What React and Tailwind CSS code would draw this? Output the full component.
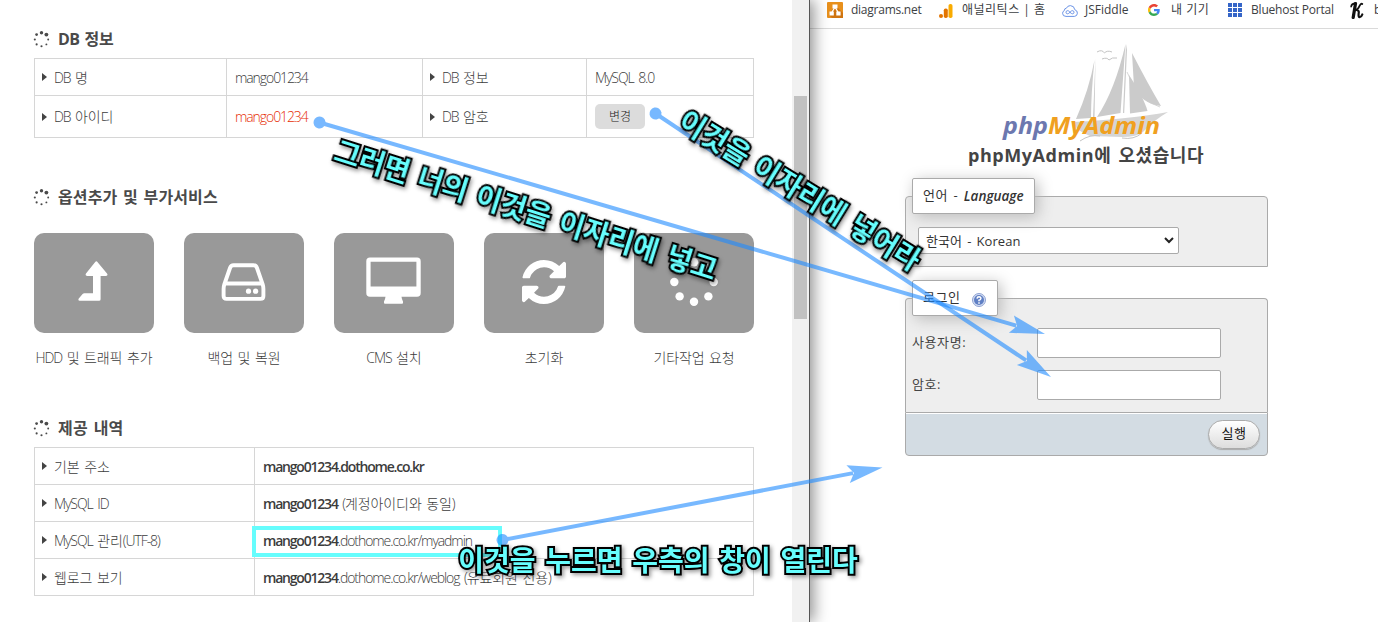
import React from "react";

/* Latin text takes the tight tracking of its parent; Hangul runs get their own. */
function Mix({ t }) {
  return t.split(/([\uac00-\ud7a3]+)/).map((s, i) =>
    i % 2 ? <span key={i} className="tracking-[-0.1px]">{s}</span> : s
  );
}

function Spinner({ size, dots, className }) {
  const pts = [
    [0, -6.3], [4.6, -4.6], [6.3, 0], [4.6, 4.6], [0, 6.3], [-4.6, 4.6], [-6.3, 0], [-4.6, -4.6],
  ];
  return (
    <svg width={size} height={size} viewBox="-8 -8 16 16" className={className} fill="currentColor">
      {pts.map(([x, y], i) => <circle key={i} cx={x} cy={y} r={dots[i]} />)}
    </svg>
  );
}

const smallDots = [1.6, 1.8, 0.9, 0.9, 1, 1, 1, 1.3];
const bigDots = [1.35, 1.35, 1.35, 1.35, 1.35, 1.35, 1.35, 1.35];

function Heading({ children, className }) {
  return (
    <h2 className={`flex h-6 items-center text-[16px] font-bold tracking-[-0.6px] text-[#4a4a4a] [word-spacing:1.5px] ${className}`}>
      <Spinner size={17} dots={smallDots} className="-ml-[1px] mr-[8px]" />
      <span className="whitespace-nowrap">{children}</span>
    </h2>
  );
}

function Label({ children }) {
  return (
    <div className="flex items-center border-r border-b border-[#d6d6d6] pl-[7px]">
      <svg width="5" height="8" viewBox="0 0 5 8" className="mr-[7px] fill-[#444]"><path d="M0 0 5 4 0 8z" /></svg>
      <span className="whitespace-nowrap"><Mix t={children} /></span>
    </div>
  );
}

function Cell({ children, className = "" }) {
  return (
    <div className={`flex items-center border-r border-b border-[#d6d6d6] pl-2 whitespace-pre ${className}`}>
      {children}
    </div>
  );
}

function Host({ children }) {
  return <b className="font-semibold tracking-[-1.2px]">{children}</b>;
}

const services = [
  ["HDD 및 트래픽 추가", (
    <svg width="32" height="42" viewBox="0 0 32 42" className="-mt-[5px] fill-white">
      <path d="M19 1.6 29 13.4Q30.4 15.6 28 16H22.6V39.2Q22.6 40.7 21 40.7H1.6Q-.3 40.2.8 38.6L4.6 34Q5.4 33.3 6.3 33.3H15V16H9.2Q6.8 15.6 8 13.4L17.4 1.8Q18.2.7 19 1.6Z" />
    </svg>
  )],
  ["백업 및 복원", (
    <svg width="45" height="38" viewBox="0 0 45 38" className="-mt-[2px] mr-[2px] fill-none stroke-white">
      <path d="M9 5Q10 2.3 12.5 2.3H32.5Q35 2.3 36 5L41.7 21.5Q42.4 23.5 42.4 26V33Q42.4 35.9 39.5 35.9H5.5Q2.6 35.9 2.6 33V26Q2.6 23.5 3.3 21.5ZM3.5 20.5H41.5" strokeWidth="3.9" />
      <circle cx="27.5" cy="28.2" r="2.6" className="fill-white stroke-none" />
      <circle cx="34.6" cy="28.2" r="2.6" className="fill-white stroke-none" />
    </svg>
  )],
  ["CMS 설치", (
    <svg width="55" height="48" viewBox="0 0 55 48" className="-mt-[5px] mr-[2px] fill-white">
      <path fillRule="evenodd" d="M4 .6H51Q54.7.6 54.7 4.3V36Q54.7 39.8 51 39.8H35.5Q35.7 42 37 44.5V46Q37 46.8 36 46.8H19Q18 46.8 18 46V44.5Q19.3 42 19.5 39.8H4Q.3 39.8.3 36V4.3Q.3.6 4 .6ZM4.6 4.8V29.4H50.4V4.8Z" />
    </svg>
  )],
  ["초기화", (
    <svg width="44" height="44" viewBox="0 0 1536 1536" className="-mt-[2px] mr-[1px] fill-white">
      <path d="M1511 928q0 5-1 7-64 268-268 434.500T764 1536q-146 0-282.500-55T238 1324l-129 129q-19 19-45 19t-45-19-19-45V960q0-26 19-45t45-19h448q26 0 45 19t19 45-19 45l-137 137q71 66 161 102t187 36q134 0 250-65t186-179q11-17 53-117 8-23 30-23h192q13 0 22.500 9.500T1511 928zM1536 128v448q0 26-19 45t-45 19h-448q-26 0-45-19t-19-45 19-45l138-138Q969 256 768 256q-134 0-250 65T332 500q-11 17-53 117-8 23-30 23H50q-13 0-22.500-9.500T18 608v-7q65-268 270-434.500T768 0q146 0 284 55.500T1297 212l130-129q19-19 45-19t45 19 19 45z" />
    </svg>
  )],
  ["기타작업 요청", <Spinner key="s" size={50} dots={bigDots} className="-mt-[3px] mr-[1px] text-white" />],
];

function HostingPanel() {
  return (
    <section className="relative z-10 flex h-[622px] w-[810px] shrink-0 border-r border-[#555] bg-white text-[14px] font-light tracking-[-1.08px] text-[#3c3c3c] shadow-[4px_0_14px_rgba(0,0,0,0.42)] [word-spacing:2px]">
      <div className="w-[792px] pl-[34px]">
        <Heading className="mt-[27px]">DB <span className="tracking-[-0.2px]">정보</span></Heading>
        <div className="mt-[7px] grid w-[720px] grid-cols-[192px_196px_164px_167px] grid-rows-[37px_42px] border-t border-l border-[#d6d6d6]">
          <Label>DB 명</Label>
          <Cell>mango01234</Cell>
          <Label>DB 정보</Label>
          <Cell>MySQL 8.0</Cell>
          <Label>DB 아이디</Label>
          <Cell className="text-[#e62e05]">mango01234</Cell>
          <Label>DB 암호</Label>
          <Cell>
            <button className="h-[25px] w-[50px] rounded-[5px] bg-[#dcdcdc] text-[12px] tracking-[0px] text-[#222]">변경</button>
          </Cell>
        </div>

        <Heading className="mt-[47px]"><span className="tracking-[0.1px]">옵션추가 및 부가서비스</span></Heading>
        <div className="mt-[24px] flex gap-[30px]">
          {services.map(([name, icon]) => (
            <div key={name} className="w-[120px]">
              <div className="flex h-[100px] items-center justify-center rounded-[10px] bg-[#999]">{icon}</div>
              <div className="mt-[15px] text-center text-[14px] leading-5 whitespace-nowrap"><Mix t={name} /></div>
            </div>
          ))}
        </div>

        <Heading className="mt-[48px]"><span className="tracking-[0.2px]">제공 내역</span></Heading>
        <div className="mt-[7px] grid w-[720px] grid-cols-[220px_499px] auto-rows-[37px] border-t border-l border-[#d6d6d6]">
          <Label>기본 주소</Label>
          <Cell><Host>mango01234.dothome.co.kr</Host></Cell>
          <Label>MySQL ID</Label>
          <Cell><span><Host>mango01234</Host> <Mix t="(계정아이디와 동일)" /></span></Cell>
          <Label>MySQL 관리(UTF-8)</Label>
          <Cell className="relative">
            <span><Host>mango01234</Host>.dothome.co.kr/myadmin</span>
            <span className="absolute top-[4px] left-[-3px] h-[31px] w-[250px] border-4 border-[#66fdfd]" />
          </Cell>
          <Label>웹로그 보기</Label>
          <Cell><span><Host>mango01234</Host>.dothome.co.kr/weblog <Mix t="(유료회원 전용)" /></span></Cell>
        </div>
      </div>
      <div className="w-[17px] bg-[#f1f1f1] px-[2px] pt-[96px]">
        <div className="h-[223px] bg-[#c1c1c1]" />
      </div>
    </section>
  );
}

function BookmarkBar() {
  return (
    <nav className="flex h-[29px] items-start overflow-hidden border-b border-[#dadada] text-[12px] leading-[20px] whitespace-nowrap text-[#3c4043]">
      <svg width="16" height="16" viewBox="0 0 16 16" className="mt-[2px] ml-[17px] shrink-0">
        <rect width="16" height="16" rx="1" fill="#e8901c" /><path d="M8 3 16 11V16H5L2 13Z" fill="#cf7410" />
        <path d="M8 5 4.500 11M8 5 11.500 11" stroke="#fff" strokeWidth="1.300" />
        <path d="M5.500 2.500h5v4h-5zM2.500 9.500h4.300v4H2.500zM9.300 9.500h4.300v4H9.300z" fill="#fff" />
      </svg>
      <span className="ml-[8px] w-[88px] shrink-0 tracking-[-0.25px]">diagrams.net</span>
      <svg width="14" height="14" viewBox="0 0 14 14" className="mt-[4px] shrink-0">
        <rect x="9.500" width="4" height="14" rx="1.800" fill="#f9ab00" /><rect x="4.800" y="4.500" width="4" height="9.500" rx="1.800" fill="#e37400" /><circle cx="2" cy="12" r="2" fill="#e37400" />
      </svg>
      <span className="ml-[9px] w-[100px] shrink-0 tracking-[0.5px]">애널리틱스 | 홈</span>
      <svg width="16" height="12" viewBox="0 0 16 12" className="mt-[5px] shrink-0 fill-none stroke-[#6b93e6]">
        <path d="M4 11.400Q.6 11.400.6 8.300.6 6.200 2.400 5.500 2.300 3.300 4.400 3.200 5.500.6 8.400.6 12.300.8 12.800 4.700 15.400 5.500 15.400 8.200 15.200 11.200 12.400 11.400Z" />
        <path d="M8 7.300Q6.500 5.400 5.300 5.700 3.900 6 4 7.300 4.100 8.700 5.400 8.800 6.600 8.800 8 7.300 9.500 5.400 10.700 5.700 12.100 6 12 7.300 11.900 8.700 10.600 8.800 9.400 8.800 8 7.300" />
      </svg>
      <span className="ml-[7px] w-[63px] shrink-0">JSFiddle</span>
      <svg width="12" height="12" viewBox="0 0 48 48" className="mt-[4px] shrink-0">
        <path fill="#EA4335" d="M24 9.500c3.540 0 6.710 1.220 9.210 3.600l6.850-6.850C35.900 2.380 30.470 0 24 0 14.620 0 6.510 5.380 2.560 13.220l7.980 6.190C12.430 13.720 17.740 9.500 24 9.500z" />
        <path fill="#4285F4" d="M46.980 24.550c0-1.570-.15-3.090-.38-4.550H24v9.020h12.940c-.58 2.960-2.260 5.480-4.780 7.180l7.730 6c4.510-4.180 7.090-10.360 7.090-17.650z" />
        <path fill="#FBBC05" d="M10.530 28.590c-.48-1.450-.76-2.990-.76-4.590s.27-3.140.76-4.590l-7.980-6.190C.92 16.460 0 20.120 0 24c0 3.880.92 7.540 2.560 10.780l7.970-6.190z" />
        <path fill="#34A853" d="M24 48c6.480 0 11.930-2.130 15.890-5.810l-7.730-6c-2.150 1.450-4.920 2.300-8.160 2.300-6.260 0-11.570-4.220-13.470-9.910l-7.980 6.190C6.510 42.620 14.620 48 24 48z" />
      </svg>
      <span className="ml-[11px] w-[57px] shrink-0 tracking-[0.5px]">내 기기</span>
      <svg width="14" height="14" viewBox="0 0 14 14" className="mt-[3px] shrink-0 fill-[#3565c8]">
        <path d="M0 0h4v4H0zM5 0h4v4H5zM10 0h4v4h-4zM0 5h4v4H0zM5 5h4v4H5zM10 5h4v4h-4zM0 10h4v4H0zM5 10h4v4H5zM10 10h4v4h-4z" />
      </svg>
      <span className="ml-[9px] w-[99px] shrink-0 tracking-[-0.2px]">Bluehost Portal</span>
      <svg width="14" height="17" viewBox="0 0 14 17" className="mt-[2px] shrink-0 fill-none stroke-[#111]" strokeLinecap="round">
        <path d="M5.500 1.500 3.200 15.500" strokeWidth="3.200" /><path d="M5.500 1.500Q1.500 1.500 1.200 4.500M12.300 2Q11 1 9.500 4 8 7.800 5 8.300" strokeWidth="1.800" /><path d="M6.500 8Q9.500 8 8.600 12 8.300 15.500 10 15 11.500 14.800 12.300 12.500" strokeWidth="2.200" />
      </svg>
      <span className="ml-[10px]">b</span>
    </nav>
  );
}

function Logo() {
  return (
    <svg width="170" height="100" viewBox="1000 42 170 100" className="ml-[190px] block">
      <g fill="#cbcbcb">
        <path d="M1094.500 60Q1091 94 1091 118L1076 119Q1089 90 1094.500 60ZM1095.500 58 1094.500 118H1093Z" />
        <path d="M1125.500 44 1120.500 113 1097 117Q1115 90 1125.500 44ZM1126 44 1123 113H1124.200L1127 50Z" />
        <path d="M1129 75Q1144 98 1147.500 111L1130 113.500Z" />
        <path d="M1132 53Q1148 84 1161 106 1142 104 1134 87Z" />
        <path d="M1127 72Q1138 101 1160 107" fill="none" stroke="#cbcbcb" strokeWidth=".8" />
        <path d="M1073 122Q1130 119 1168 112 1154 120 1143 132 1137 137 1122 137L1090 136Q1075 130 1073 122Z" opacity=".8" />
      </g>
      <path d="M1097 52Q1102 49 1104.500 53 1107 50 1112 52M1102 59Q1107 57 1109 60 1112 57 1117 58M1080 141Q1090 134 1100 136M1122 138Q1134 140 1142 133" fill="none" stroke="#c4c4c4" strokeWidth="1" />
      <g fontFamily="'Noto Sans','Open Sans',sans-serif" fontSize="24" fontWeight="700" fontStyle="italic">
        <text x="1003" y="133.500" fill="#6c78af" textLength="45" lengthAdjust="spacingAndGlyphs">php</text>
        <text x="1048" y="133.500" fill="#f0a020" textLength="112" lengthAdjust="spacingAndGlyphs">MyAdmin</text>
      </g>
    </svg>
  );
}

const legend = "absolute left-[6px] top-[-19px] flex h-[36px] items-center border border-[#aaa] bg-white pl-[10px] rounded-[2px] text-[#333] shadow-[3px_3px_15px_#bbb] whitespace-pre";

function LoginPanel() {
  return (
    <section className="h-[622px] w-[568px] overflow-hidden bg-white text-[13px] text-[#444]">
      <BookmarkBar />
      <div className="pt-[13px]"><Logo /></div>
      <h1 className="ml-[158px] h-[27px] text-[18px] leading-[27px] font-bold tracking-[0.55px] whitespace-nowrap [word-spacing:2px]">phpMyAdmin에 오셨습니다</h1>

      <div className="relative mt-[27px] ml-[95px] h-[71px] w-[363px] rounded-t-[4px] border border-[#aaa] bg-[#eee] pt-[30px] pl-[12px]">
        <div className={`${legend} w-[123px]`}><span className="tracking-[0.6px] [word-spacing:1.5px]">언어 - </span><i className="text-[13.5px] font-semibold">Language</i></div>
        <div className="flex h-[27px] w-[261px] items-center justify-between rounded-[2px] border border-[#aaa] bg-white pr-[4px] pl-[7px] text-[13px] text-[#333]">
          <span className="mt-[2px] tracking-[0.1px] [word-spacing:1.5px]">한국어 - Korean</span>
          <svg width="10" height="7" viewBox="0 0 10 7" className="fill-none stroke-[#222]"><path d="M1 1 5 5 9 1" strokeWidth="2" /></svg>
        </div>
      </div>

      <div className="relative mt-[31px] ml-[95px] flex h-[114px] w-[363px] flex-col gap-[12px] rounded-t-[4px] border border-b-0 border-[#aaa] bg-[#eee] pt-[29px] pl-[6px]">
        <div className={`${legend} w-[86px]`}>
          <span className="tracking-[0.6px]">로그인</span>
          <svg width="14" height="14" viewBox="0 0 14 14" className="mt-[4px] ml-[11px]">
            <circle cx="7" cy="7" r="6.500" fill="#d5def2" stroke="#8fa3d3" /><circle cx="7" cy="7" r="5" fill="#5f7fc4" />
            <path d="M5 5.600Q5.200 3.800 7 3.800 9 3.900 8.900 5.500 8.700 6.700 7 7.300V8.200M7 9.300V10.800" fill="none" stroke="#fff" strokeWidth="1.500" />
          </svg>
        </div>
        <label className="flex h-[30px] items-center"><span className="w-[125px] tracking-[0.6px]">사용자명:</span><span className="h-[30px] w-[184px] rounded-[2px] border border-[#aaa] bg-white" /></label>
        <label className="flex h-[30px] items-center"><span className="w-[125px] tracking-[0.6px]">암호:</span><span className="h-[30px] w-[184px] rounded-[2px] border border-[#aaa] bg-white" /></label>
      </div>
      <div className="ml-[95px] flex h-[44px] w-[363px] items-center justify-end rounded-b-[4px] border border-[#aaa] bg-[#d3dce3] pr-[7px] shadow-[inset_0_1px_0_#fff]">
        <button className="h-[29px] w-[52px] rounded-full border border-[#aaa] bg-linear-to-b from-white to-[#ddd] text-[13px] tracking-[0.5px] text-[#111] shadow-[0_1px_1px_#aaa]">실행</button>
      </div>
    </section>
  );
}

const arrows = [
  [319.5, 122.5, 1045, 334],
  [655.5, 113.5, 1051, 377],
  [502.5, 540, 882.5, 467.5],
];

function Arrows() {
  return (
    <svg width="1378" height="622" className="pointer-events-none absolute top-0 left-0 z-20 fill-[#1e8aff]">
      {arrows.map(([x1, y1, x2, y2], i) => {
        const len = Math.hypot(x2 - x1, y2 - y1);
        const deg = (Math.atan2(y2 - y1, x2 - x1) * 180) / Math.PI;
        return (
          <g key={i} transform={`translate(${x1} ${y1}) rotate(${deg})`} opacity=".6">
            <circle r="6" />
            <path d={`M0 -2H${len - 30}V2H0Z M${len} 0L${len - 35} -9 ${len - 29} 0 ${len - 35} 9Z`} />
          </g>
        );
      })}
    </svg>
  );
}

const caption = "absolute z-30 flex h-[40px] items-center justify-center text-[28px] leading-[40px] font-bold whitespace-nowrap text-[#66fdfd] [word-spacing:2.5px] [-webkit-text-stroke:4px_#000] [paint-order:stroke_fill] [stroke-linejoin:round] [filter:drop-shadow(2px_2px_2px_rgba(0,0,0,0.4))]";

export default function App() {
  return (
    <main className="relative flex h-[622px] w-[1378px] overflow-hidden bg-white font-['Open_Sans','Noto_Sans_CJK_KR',sans-serif]">
      <HostingPanel />
      <LoginPanel />
      <Arrows />
      <div className={`${caption} top-[190px] left-[316px] w-[420px] rotate-[17.6deg]`}>그러면 너의 이것을 이자리에 넣고</div>
      <div className={`${caption} top-[170px] left-[650px] w-[300px] rotate-[31.6deg]`}>이것을 이자리에 넣어라</div>
      <div className={`${caption} top-[540px] left-[448px] w-[420px]`}>이것을 누르면 우측의 창이 열린다</div>
    </main>
  );
}
